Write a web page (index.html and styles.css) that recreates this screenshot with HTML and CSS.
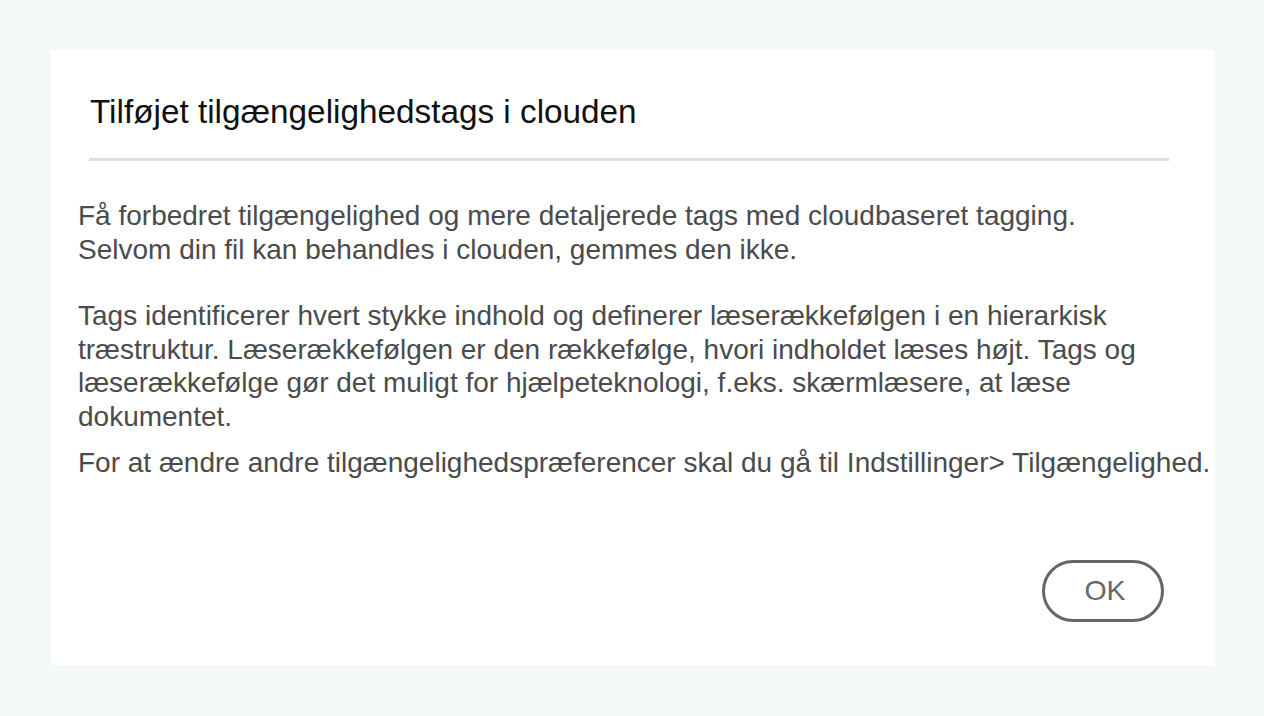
FILE: index.html
```html
<!DOCTYPE html>
<html lang="da">
<head>
<meta charset="utf-8">
<title>Tilføjet tilgængelighedstags i clouden</title>
<link rel="stylesheet" href="styles.css">
</head>
<body>
<div class="page">
  <div class="dialog">
    <div class="header">
      <h1 class="title">Tilføjet tilgængelighedstags i clouden</h1>
      <div class="divider"></div>
    </div>
    <div class="content">
      <p class="para">Få forbedret tilgængelighed og mere detaljerede tags med cloudbaseret tagging.<br>Selvom din fil kan behandles i clouden, gemmes den ikke.</p>
      <p class="para gap">Tags identificerer hvert stykke indhold og definerer læserækkefølgen i en hierarkisk<br>træstruktur. Læserækkefølgen er den rækkefølge, hvori indholdet læses højt. Tags og<br>læserækkefølge gør det muligt for hjælpeteknologi, f.eks. skærmlæsere, at læse<br>dokumentet.</p>
      <p class="para small-gap">For at ændre andre tilgængelighedspræferencer skal du gå til Indstillinger&gt; Tilgængelighed.</p>
    </div>
    <div class="footer">
      <button class="ok">OK</button>
    </div>
  </div>
</div>
</body>
</html>
```
FILE: styles.css
```css
html, body {
  margin: 0;
  padding: 0;
  background: #f5f8f9;
}
.page {
  box-sizing: border-box;
  width: 1264px;
  height: 716px;
  padding: 50px 49px 51px 51px;
  font-family: "Liberation Sans", Arial, sans-serif;
}
.dialog {
  background: #ffffff;
  height: 100%;
  display: flex;
  flex-direction: column;
  box-sizing: border-box;
}
.header {
  padding: 44px 46px 0 38px;
}
.title {
  margin: 0 0 0 1px;
  font-size: 33.3px;
  font-weight: normal;
  color: #111111;
  line-height: 36px;
}
.divider {
  margin-top: 28px;
  height: 3px;
  background: #dddddd;
}
.content {
  padding: 38px 0 0 27px;
}
.para {
  margin: 0;
  font-size: 28px;
  line-height: 33.5px;
  color: #4b4b4b;
  white-space: nowrap;
}
.gap {
  margin-top: 33px;
}
.small-gap {
  margin-top: 13px;
}
.footer {
  margin-top: auto;
  display: flex;
  justify-content: flex-end;
  padding: 0 51px 43px 0;
}
.ok {
  width: 122px;
  height: 62px;
  border: 3px solid #666666;
  border-radius: 31px;
  background: #ffffff;
  color: #666666;
  font-family: "Liberation Sans", Arial, sans-serif;
  font-size: 28.5px;
  padding: 0 0 2px 4px;
  box-sizing: border-box;
}
```
